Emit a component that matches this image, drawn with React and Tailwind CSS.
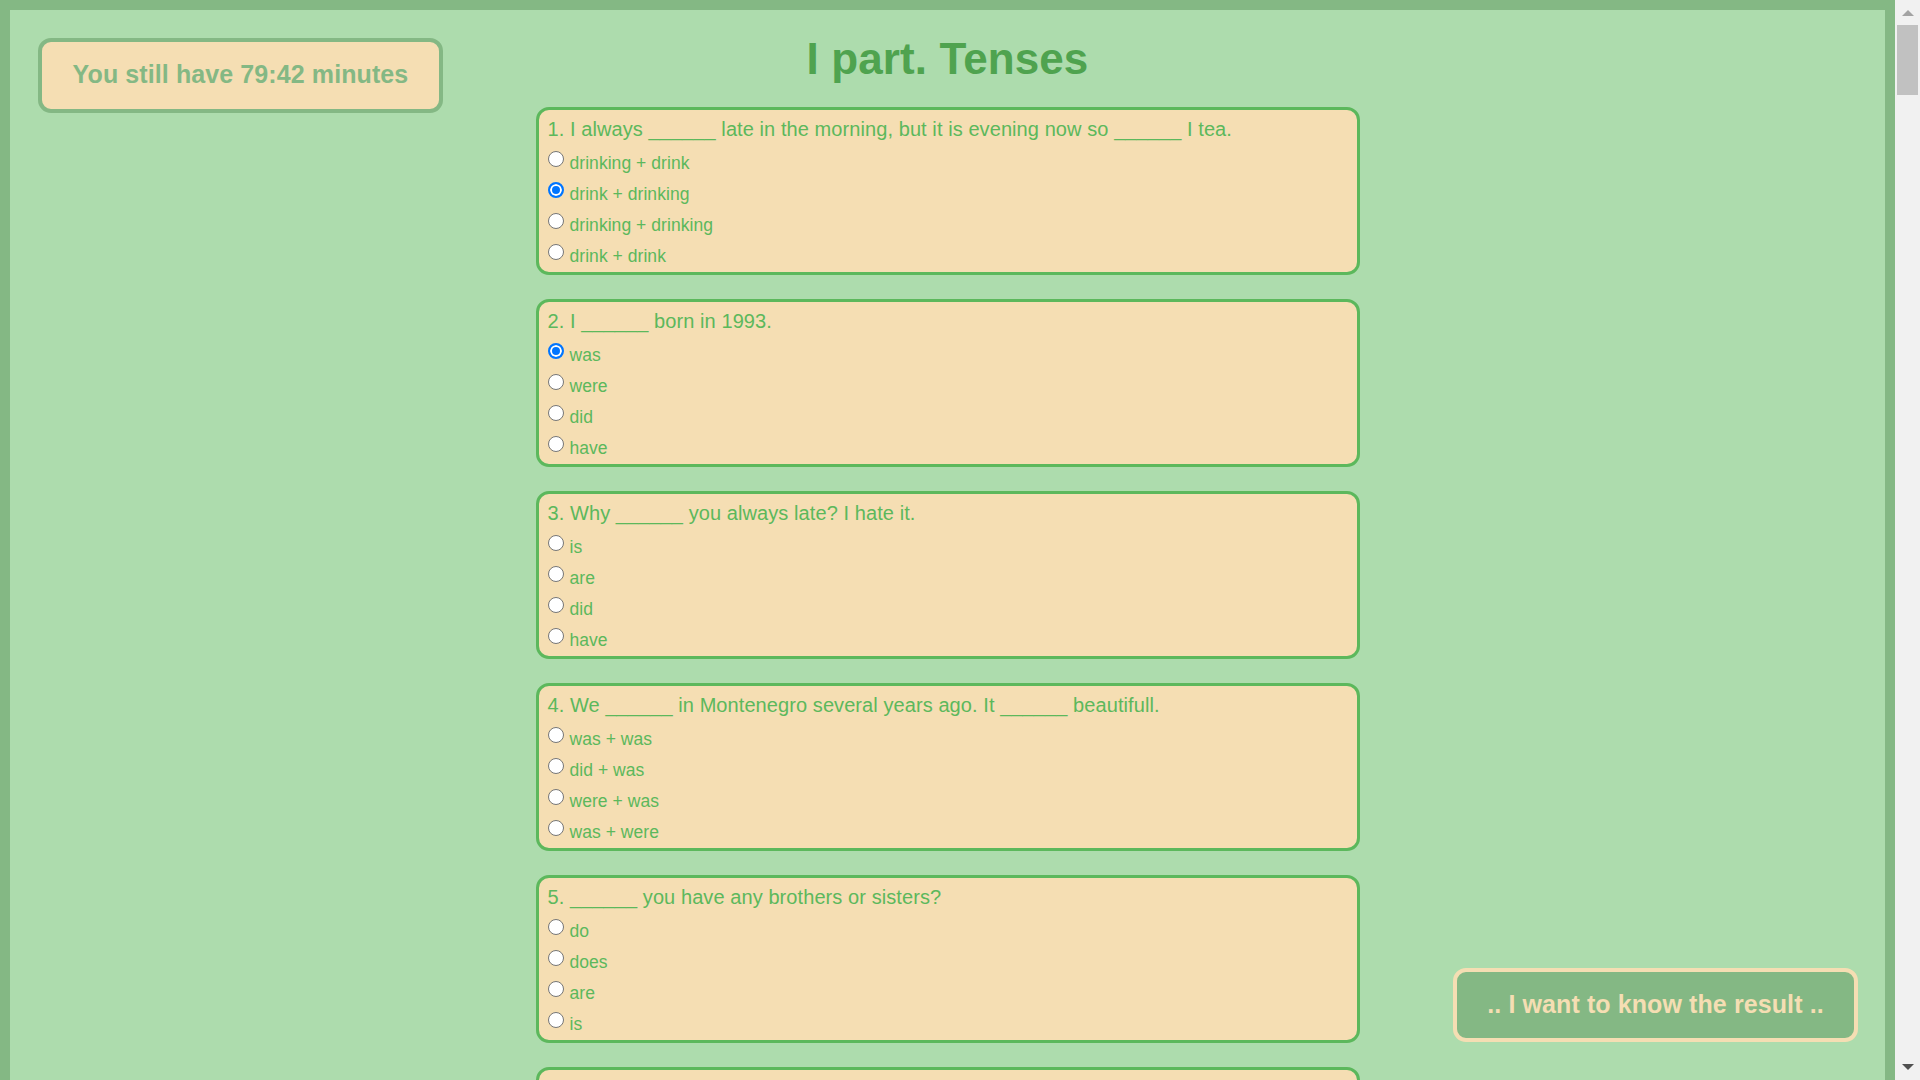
import React from 'react';

const questions = [
  {
    text: '1. I always ______ late in the morning, but it is evening now so ______ I tea.',
    options: ['drinking + drink', 'drink + drinking', 'drinking + drinking', 'drink + drink'],
    checked: 1
  },
  {
    text: '2. I ______ born in 1993.',
    options: ['was', 'were', 'did', 'have'],
    checked: 0
  },
  {
    text: '3. Why ______ you always late? I hate it.',
    options: ['is', 'are', 'did', 'have'],
    checked: -1
  },
  {
    text: '4. We ______ in Montenegro several years ago. It ______ beautifull.',
    options: ['was + was', 'did + was', 'were + was', 'was + were'],
    checked: -1
  },
  {
    text: '5. ______ you have any brothers or sisters?',
    options: ['do', 'does', 'are', 'is'],
    checked: -1
  }
];

function QuestionCard({ q, index }) {
  return (
    <div className="mb-[24px] shrink-0 rounded-[13px] border-[3px] border-[#5cb85c] bg-[#f5deb3] pl-[9px] pr-[9px] pt-[8px] text-[#5cb85c]">
      <div className="mb-[7px] text-[20px] leading-[23px] tracking-[0.08px]">{q.text}</div>
      {q.options.map((opt, i) => (
        <label key={opt} className="flex h-[31px] items-start">
          <input
            type="radio"
            name={`q${index}`}
            defaultChecked={q.checked === i}
            className="m-0 mt-[3px] h-4 w-4 shrink-0 appearance-none rounded-full border border-[#767676] bg-white checked:border-2 checked:border-[#0075ff] checked:bg-[#0075ff] checked:shadow-[inset_0_0_0_2px_white]"
          />
          <span className="ml-[6px] text-[17.5px] leading-[31px] tracking-[0.05px]">{opt}</span>
        </label>
      ))}
    </div>
  );
}

export default function App() {
  return (
    <div className="flex h-screen w-full overflow-hidden font-['Liberation_Sans',Arial,sans-serif]">
      {/* page with html margin colour */}
      <div className="flex min-w-0 flex-1 flex-col bg-[#84b884] px-[10px] pt-[10px]">
        <div className="grid min-h-0 flex-1 grid-cols-[1fr_824px_1fr] grid-rows-[minmax(0,1fr)] overflow-hidden bg-[#addcad]">
          {/* Timer */}
          <div className="pl-[28px] pt-[28px]">
            <div className="flex h-[75px] w-[405px] items-center justify-center rounded-[13px] border-4 border-[#84b884] bg-[#f5deb3] pb-[2px] text-[25px] font-bold tracking-[0.1px] text-[#84b884]">
              You still have 79:42 minutes
            </div>
          </div>

          {/* Questions */}
          <div className="flex min-h-0 flex-col">
            <h1 className="mb-[23px] mt-[24px] text-center text-[44px] font-bold leading-[50px] tracking-[0.1px] text-[#4fa34f]">
              I part. Tenses
            </h1>
            {questions.map((q, i) => (
              <QuestionCard key={i} q={q} index={i} />
            ))}
            {/* next card, cut off by the window */}
            <div className="h-[168px] shrink-0 rounded-[13px] border-[3px] border-[#5cb85c] bg-[#f5deb3]" />
          </div>

          {/* Result button */}
          <div className="flex flex-col items-end justify-end pb-[38px] pr-[27px]">
            <button className="flex h-[74px] w-[405px] items-center justify-center rounded-[13px] border-4 border-[#f5deb3] bg-[#84b884] text-[25px] font-bold tracking-[0.1px] text-[#f5deb3]">
              .. I want to know the result ..
            </button>
          </div>
        </div>
      </div>

      {/* Scrollbar */}
      <div className="flex w-[25px] shrink-0 flex-col items-center bg-[#f1f1f1]">
        <svg width="12" height="6" viewBox="0 0 12 6" className="mt-[10px]">
          <path d="M6 0 L12 6 L0 6 Z" fill="#a3a3a3" />
        </svg>
        <div className="mt-[9px] h-[70px] w-[21px] bg-[#c1c1c1]" />
        <div className="flex-1" />
        <svg width="12" height="6" viewBox="0 0 12 6" className="mb-[10px]">
          <path d="M0 0 L12 0 L6 6 Z" fill="#505050" />
        </svg>
      </div>
    </div>
  );
}
